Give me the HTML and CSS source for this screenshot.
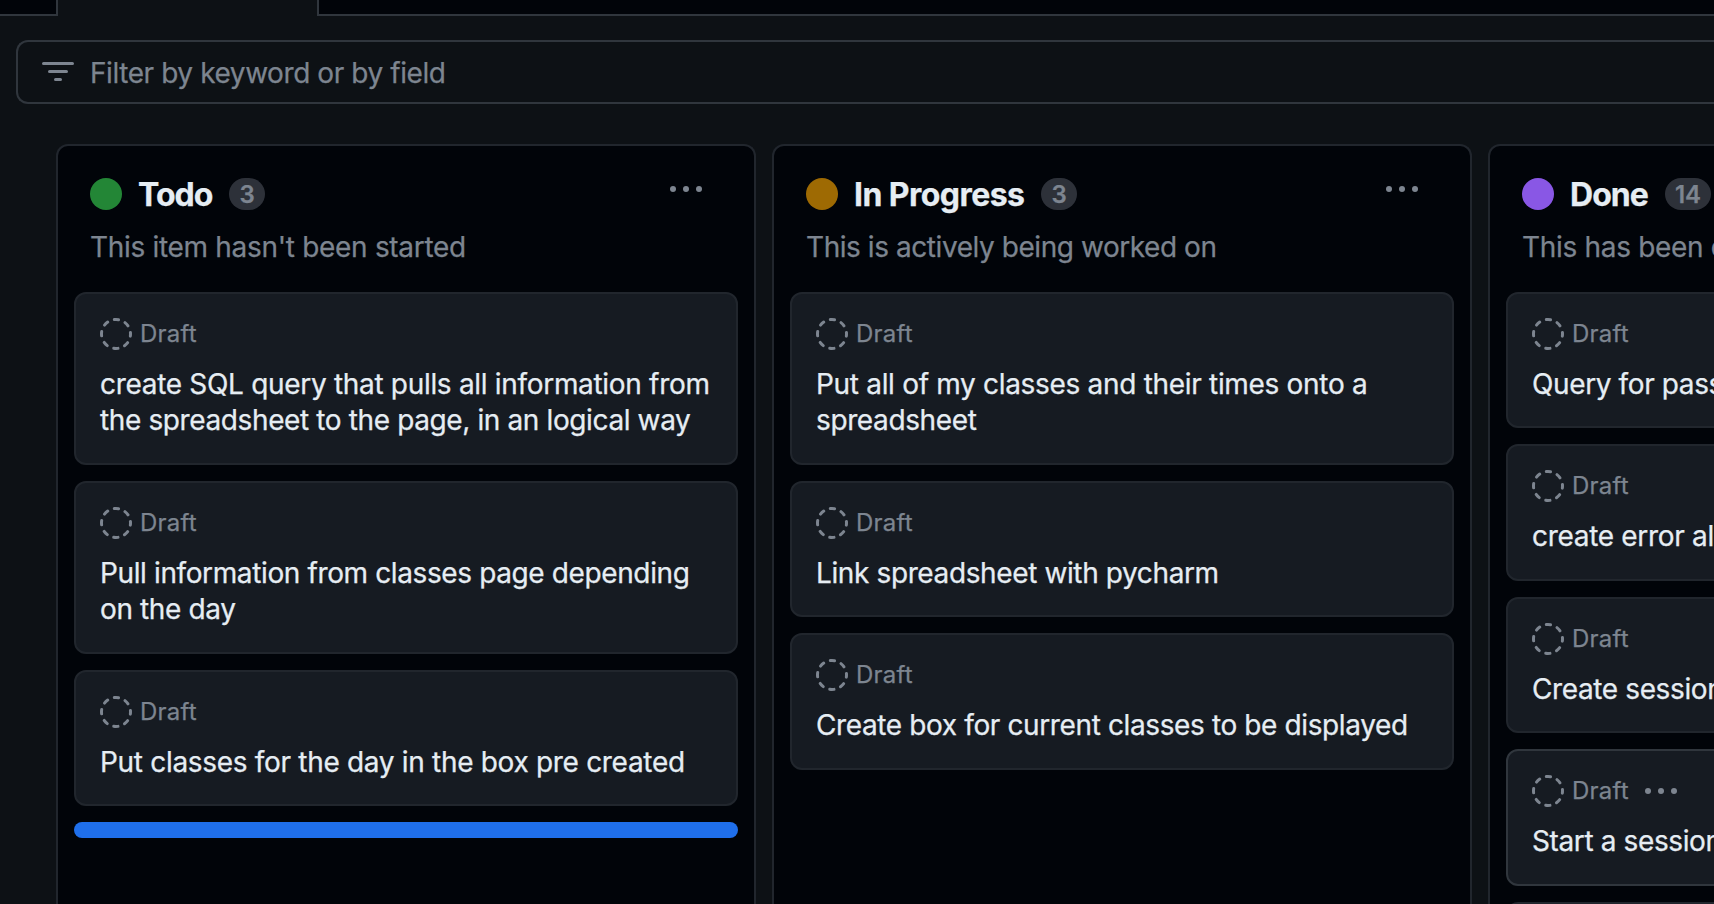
FILE: index.html
```html
<!DOCTYPE html>
<html lang="en"><head><meta charset="utf-8"><title>Project board</title><link rel="stylesheet" href="styles.css"></head>
<body>
<svg width="0" height="0" class="defs"><defs>
<symbol id="draft" viewBox="0 0 32 32"><circle cx="16" cy="16" r="14.5" fill="none" stroke="currentColor" stroke-width="3" stroke-linecap="round" stroke-dasharray="4.4 6.988" stroke-dashoffset="2.2"/></symbol>
<symbol id="dots" viewBox="0 0 32 6"><circle cx="3" cy="3" r="3"/><circle cx="16" cy="3" r="3"/><circle cx="29" cy="3" r="3"/></symbol>
</defs></svg>
<div class="tabs"><div class="tab-rest start"></div><div class="tab-active"></div><div class="tab-rest end"></div></div>
<div class="filter"><svg class="filter-icon" viewBox="0 0 32 20"><path d="M1.5 1.5h29M7.5 9.5h17M13.5 17.5h5"/></svg><span>Filter by keyword or by field</span></div>
<main class="board">
<section class="column">
<header><div class="head"><i class="dot green"></i><h2 class="tight">Todo</h2><span class="count">3</span><svg class="dots"><use href="#dots"/></svg></div><p class="loose">This item hasn't been started</p></header>
<article class="card"><div class="meta"><svg class="draft"><use href="#draft"/></svg><span>Draft</span></div><div class="title"><span class="loose">create SQL query that pulls all information from</span><br>the spreadsheet to the page, in an logical way</div></article>
<article class="card"><div class="meta"><svg class="draft"><use href="#draft"/></svg><span>Draft</span></div><div class="title">Pull information from classes page depending<br>on the day</div></article>
<article class="card"><div class="meta"><svg class="draft"><use href="#draft"/></svg><span>Draft</span></div><div class="title loose">Put classes for the day in the box pre created</div></article>
<div class="drop"></div>
</section>
<section class="column">
<header><div class="head"><i class="dot amber"></i><h2>In Progress</h2><span class="count">3</span><svg class="dots"><use href="#dots"/></svg></div><p>This is actively being worked on</p></header>
<article class="card"><div class="meta"><svg class="draft"><use href="#draft"/></svg><span>Draft</span></div><div class="title"><span class="loose">Put all of my classes and their times onto a</span><br>spreadsheet</div></article>
<article class="card"><div class="meta"><svg class="draft"><use href="#draft"/></svg><span>Draft</span></div><div class="title">Link spreadsheet with pycharm</div></article>
<article class="card"><div class="meta"><svg class="draft"><use href="#draft"/></svg><span>Draft</span></div><div class="title">Create box for current classes to be displayed</div></article>
</section>
<section class="column">
<header><div class="head"><i class="dot purple"></i><h2 class="tight">Done</h2><span class="count">14</span></div><p class="loose">This has been completed</p></header>
<article class="card"><div class="meta"><svg class="draft"><use href="#draft"/></svg><span>Draft</span></div><div class="title">Query for passwords</div></article>
<article class="card"><div class="meta"><svg class="draft"><use href="#draft"/></svg><span>Draft</span></div><div class="title loose">create error alerts</div></article>
<article class="card"><div class="meta"><svg class="draft"><use href="#draft"/></svg><span>Draft</span></div><div class="title">Create sessions</div></article>
<article class="card hover"><div class="meta"><svg class="draft"><use href="#draft"/></svg><span>Draft</span><svg class="dots"><use href="#dots"/></svg></div><div class="title">Start a session</div></article>
<article class="card"></article>
</section>
</main>
</body></html>
```
FILE: styles.css
```css
* { box-sizing: border-box; }
html { overflow: hidden; }
body { margin: 0; height: 904px; display: flex; flex-direction: column; overflow: hidden; background: #0d1115; font-family: Inter, "Noto Sans", sans-serif; color: #e6edf3; font-size: 28px; letter-spacing: -0.38px; -webkit-text-stroke: 0.25px currentColor; }
.defs { display: block; flex: none; }
.tabs { display: flex; flex: none; height: 16px; }
.tab-rest { background: #010409; border-bottom: 2px solid #30363d; }
.start { width: 58px; border-right: 2px solid #30363d; }
.tab-active { width: 259px; }
.end { flex: 1; border-left: 2px solid #30363d; }
.filter { flex: none; margin: 24px 0 0 16px; height: 64px; border: 2px solid #30363d; border-right: 0; border-radius: 12px 0 0 12px; display: flex; align-items: center; gap: 16px; padding-left: 24px; color: #7d8590; letter-spacing: -0.42px; }
.filter span { padding-top: 2px; }
.filter-icon { width: 32px; height: 20px; fill: none; stroke: #7d8590; stroke-width: 3; stroke-linecap: round; }
.board { flex: 1; min-height: 0; display: flex; gap: 16px; padding: 40px 0 0 56px; overflow: hidden; }
.column { width: 700px; flex: none; display: flex; flex-direction: column; gap: 16px; padding: 0 16px; background: #010409; border: 2px solid #21262d; border-bottom: 0; border-radius: 12px 12px 0 0; overflow: hidden; }
header { flex: none; height: 130px; padding: 32px 16px 0; }
.head { display: flex; align-items: center; height: 32px; }
.dot { width: 32px; height: 32px; border-radius: 50%; }
.green { background: #238636; }
.amber { background: #9e6a03; }
.purple { background: #8957e5; }
h2 { margin: 0 17px 0 16px; padding-top: 2px; font-size: 32px; font-weight: 650; line-height: 32px; letter-spacing: -0.55px; }
.tight { letter-spacing: -0.95px; }
.count { height: 32px; min-width: 35px; padding: 1px 10px 0; border-radius: 16px; background: #2d3139; color: #7d8590; font-size: 24px; font-weight: 600; line-height: 32px; letter-spacing: 0; text-align: center; }
.dots { width: 32px; height: 6px; fill: #7d8590; }
.head .dots { margin: 0 20px 10px auto; }
p { margin: 17px 0 0; line-height: 40px; color: #7d8590; white-space: nowrap; letter-spacing: -0.44px; }
.loose { letter-spacing: -0.31px; }
.card { flex: none; min-height: 136.4px; padding: 24px; background: #161b22; border: 2px solid #21262d; border-radius: 12px; }
.hover { border-color: #30363d; }
.meta { display: flex; align-items: center; height: 32px; gap: 8px; font-size: 24px; letter-spacing: 0.2px; line-height: 30px; color: #7d8590; }
.draft { width: 32px; height: 32px; }
.meta .dots { margin: 0 0 1px 8px; }
.title { margin-top: 16px; line-height: 36.4px; white-space: nowrap; }
.drop { flex: none; height: 16px; border-radius: 8px; background: #1f6feb; }
```
